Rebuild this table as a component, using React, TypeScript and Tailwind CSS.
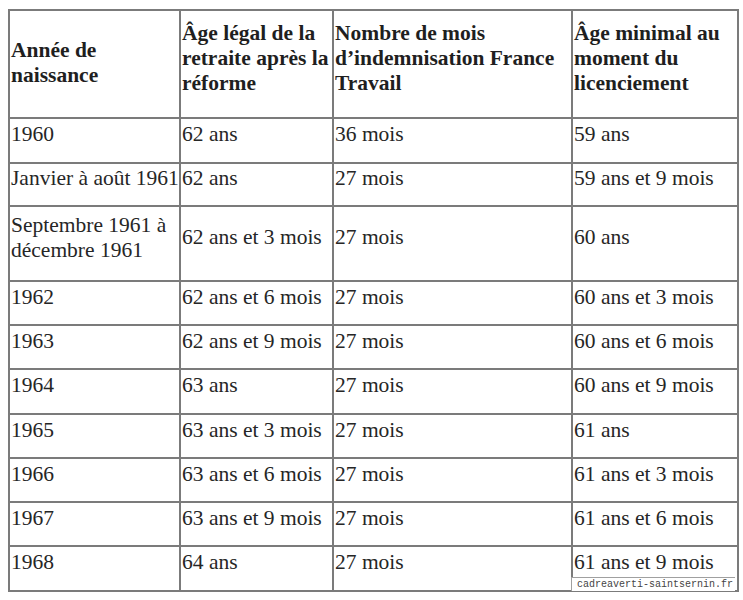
import React from "react";

const rows: { cells: string[][]; h: string }[] = [
  { cells: [["1960"], ["62 ans"], ["36 mois"], ["59 ans"]], h: "h-[45px]" },
  { cells: [["Janvier à août 1961"], ["62 ans"], ["27 mois"], ["59 ans et 9 mois"]], h: "h-[43px]" },
  { cells: [["Septembre 1961 à", "décembre 1961"], ["62 ans et 3 mois"], ["27 mois"], ["60 ans"]], h: "h-[75px]" },
  { cells: [["1962"], ["62 ans et 6 mois"], ["27 mois"], ["60 ans et 3 mois"]], h: "h-[44px]" },
  { cells: [["1963"], ["62 ans et 9 mois"], ["27 mois"], ["60 ans et 6 mois"]], h: "h-[44px]" },
  { cells: [["1964"], ["63 ans"], ["27 mois"], ["60 ans et 9 mois"]], h: "h-[45px]" },
  { cells: [["1965"], ["63 ans et 3 mois"], ["27 mois"], ["61 ans"]], h: "h-[44px]" },
  { cells: [["1966"], ["63 ans et 6 mois"], ["27 mois"], ["61 ans et 3 mois"]], h: "h-[44px]" },
  { cells: [["1967"], ["63 ans et 9 mois"], ["27 mois"], ["61 ans et 6 mois"]], h: "h-[44px]" },
  { cells: [["1968"], ["64 ans"], ["27 mois"], ["61 ans et 9 mois"]], h: "h-[45px]" },
];

const headers: string[][] = [
  ["Année de", "naissance"],
  ["Âge légal de la", "retraite après la", "réforme"],
  ["Nombre de mois", "d’indemnisation France", "Travail"],
  ["Âge minimal au", "moment du", "licenciement"],
];

// cell lines, broken the way the source table wraps
function Lines({ lines }: { lines: string[] }) {
  return (
    <>
      {lines.map((l, i) => (
        <div key={i} className="whitespace-nowrap">
          {l}
        </div>
      ))}
    </>
  );
}

export default function App() {
  const cell = "border-2 border-[#7b7b7b] align-middle pl-[1px] pr-0 pb-[12px] text-left";
  return (
    <div className="w-[743px] h-[600px] bg-white pl-[8px] pt-[9px]">
      <div className="relative w-[729px]">
        <table
          className="w-[729px] table-fixed border-collapse text-[21.5px] leading-[25px] text-[#262626]"
          style={{ fontFamily: '"Liberation Serif", "Times New Roman", serif' }}
        >
          <colgroup>
            <col className="w-[171px]" />
            <col className="w-[153px]" />
            <col className="w-[239px]" />
            <col className="w-[166px]" />
          </colgroup>
          <thead>
            <tr className="h-[108px]">
              {headers.map((h, i) => (
                <th key={i} className={cell + (i === 0 ? " pt-[9px]" : " pt-0") + " font-bold text-[#1f1f1f]"}>
                  <Lines lines={h} />
                </th>
              ))}
            </tr>
          </thead>
          <tbody>
            {rows.map((r, i) => (
              <tr key={i} className={r.h}>
                {r.cells.map((c, j) => (
                  <td key={j} className={cell + " pt-0"}>
                    <Lines lines={c} />
                  </td>
                ))}
              </tr>
            ))}
          </tbody>
        </table>
        {/* source watermark */}
        <div
          className="absolute right-[2px] bottom-[1px] bg-white border-l border-t border-[#a0a0a0] pl-[5px] pr-[2px] pt-[1px] text-[10px] leading-[12px] text-[#444]"
          style={{ fontFamily: '"Liberation Mono", "DejaVu Sans Mono", monospace' }}
        >
          cadreaverti-saintsernin.fr
        </div>
      </div>
    </div>
  );
}
